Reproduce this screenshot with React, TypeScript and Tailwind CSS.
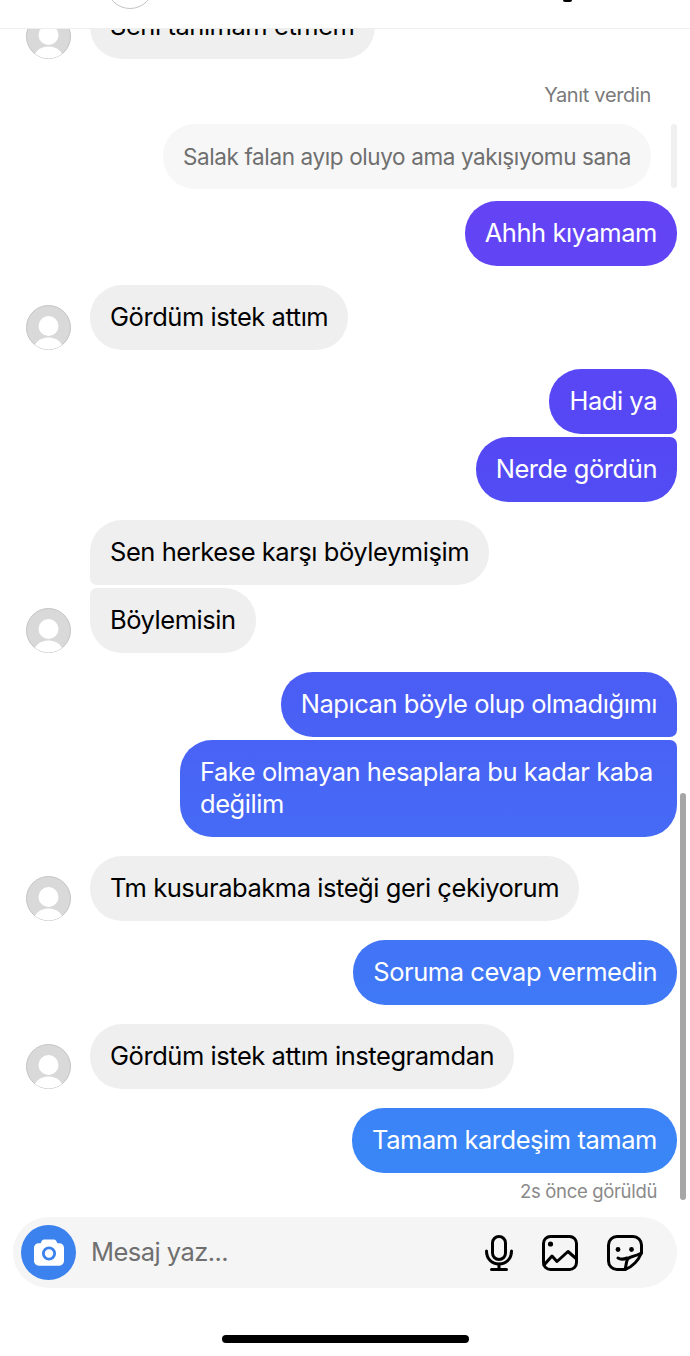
import React from "react";

const font = { fontFamily: '"Inter", "Liberation Sans", sans-serif' };

function Avatar() {
  return (
    <svg viewBox="0 0 45 45" className="w-[45px] h-[45px] shrink-0 block">
      <defs>
        <clipPath id="avatarClip">
          <circle cx="22.5" cy="22.5" r="22" />
        </clipPath>
      </defs>
      <circle cx="22.5" cy="22.5" r="22" fill="#d9d9d9" stroke="#c4c4c4" />
      <g clipPath="url(#avatarClip)" fill="#fff">
        <circle cx="22.5" cy="21" r="10" />
        <ellipse cx="22.5" cy="45" rx="15" ry="12.500" />
      </g>
    </svg>
  );
}

function Incoming({ text, mt, avatar, tight }: { text: string; mt: string; avatar?: boolean; tight?: string }) {
  return (
    <div className={`flex items-end ${mt}`}>
      <div className="w-[90px] shrink-0 pl-[26px]">{avatar ? <Avatar /> : null}</div>
      <div className={`h-[65px] flex items-center px-5 bg-[#efefef] text-black text-[25.5px] tracking-[-0.45px] rounded-[32px] ${tight ?? ""}`}>
        {text}
      </div>
    </div>
  );
}

function Outgoing({ children, mt, tight }: { children: React.ReactNode; mt: string; tight?: string }) {
  return (
    <div className={`flex justify-end pr-[13px] ${mt}`}>
      <div className={`bg-fixed bg-[linear-gradient(180deg,#6840f4_0px,#6344f5_230px,#5448f4_450px,#4a5ff5_704px,#3a86f7_1150px,#3a86f7_1356px)] text-white text-[25.5px] tracking-[-0.45px] leading-[32px] px-5 pt-4 pb-[17px] rounded-[32px] ${tight ?? ""}`}>
        {children}
      </div>
    </div>
  );
}

function Mic() {
  return (
    <svg viewBox="0 0 28 36" className="w-[28px] h-[36px]" fill="none" stroke="#000" strokeWidth="3" strokeLinecap="round" strokeLinejoin="round">
      <rect x="7.500" y="1.500" width="13" height="23" rx="6.500" />
      <path d="M1.500 16c0 8 5.500 13 12.500 13s12.500-5 12.500-13" />
      <path d="M14 29v5.500M6.500 34.500h15" />
    </svg>
  );
}

function ImageIcon() {
  return (
    <svg viewBox="0 0 36 36" className="w-[36px] h-[36px]" fill="none" stroke="#000" strokeWidth="3" strokeLinejoin="round" strokeLinecap="round">
      <rect x="1.500" y="1.500" width="33" height="33" rx="7" />
      <circle cx="8.500" cy="9" r="2.600" fill="#000" stroke="none" />
      <path d="M2 30l8-9 5 5.500 11-10 8 7" />
    </svg>
  );
}

function Sticker() {
  return (
    <svg viewBox="0 0 36 36" className="w-[36px] h-[36px]" fill="none" stroke="#000" strokeWidth="3" strokeLinejoin="round" strokeLinecap="round">
      <path d="M18 34.500H10A8.500 8.500 0 0 1 1.500 26V10A8.500 8.500 0 0 1 10 1.500h16A8.500 8.500 0 0 1 34.500 10v8C31 26 25 32 18 34.500z" />
      <path d="M18 34.500c1-3 1-6 2-9 .5-2 2-3 4-3.500 3.500-1 7-2 10.500-4" />
      <path d="M11 23c2.500 1.500 5.500 1.500 9 0" />
      <circle cx="11" cy="14.500" r="2.400" fill="#000" stroke="none" />
      <circle cx="24.500" cy="14.500" r="2.400" fill="#000" stroke="none" />
    </svg>
  );
}

function Camera() {
  return (
    <svg viewBox="0 0 32 28" className="w-[30px] h-[27px]">
      <path fill="#fff" d="M11 0h10a3 3 0 0 1 2.600 1.500L25 4h2a5 5 0 0 1 5 5v14a5 5 0 0 1-5 5H5a5 5 0 0 1-5-5V9a5 5 0 0 1 5-5h2l1.400-2.500A3 3 0 0 1 11 0z" />
      <circle cx="16" cy="15" r="6" fill="none" stroke="#3b82ee" strokeWidth="3" />
    </svg>
  );
}

export default function App() {
  return (
    <div style={font} className="relative w-[690px] h-[1356px] bg-white overflow-hidden flex flex-col">
      <header className="relative z-10 h-[29px] shrink-0 bg-white border-b border-[#eeeeee] overflow-hidden flex justify-between pl-[106px] pr-[118px]">
        <div className="w-[48px] h-[48px] -mt-[39px] rounded-full border border-[#c4c4c4] bg-white" />
        <div className="w-[9px] h-[2px] rounded-b-full bg-black" />
      </header>

      <main className="flex-1 flex flex-col -mt-[35px] min-h-0">
        <Incoming text="Seni tanımam etmem" mt="mt-0" avatar />

        <div className="mt-[23px] pr-[39px] text-right text-[20px] tracking-[-0.33px] leading-[26px] text-[#7a7a7a]">Yanıt verdin</div>

        <div className="flex justify-end pr-[39px] mt-[16px]">
          <div className="h-[65px] flex items-center px-5 rounded-[32px] bg-[#f7f7f7] text-[#6f6f6f] text-[22.5px] tracking-[-0.38px]">
            Salak falan ayıp oluyo ama yakışıyomu sana
          </div>
        </div>

        <Outgoing mt="mt-[12px]">Ahhh kıyamam</Outgoing>
        <Incoming text="Gördüm istek attım" mt="mt-[19px]" avatar />
        <Outgoing mt="mt-[19px]" tight="rounded-br-[7px]">Hadi ya</Outgoing>
        <Outgoing mt="mt-[3px]" tight="rounded-tr-[7px]">Nerde gördün</Outgoing>
        <Incoming text="Sen herkese karşı böyleymişim" mt="mt-[18px]" tight="rounded-bl-[7px]" />
        <Incoming text="Böylemisin" mt="mt-[3px]" avatar tight="rounded-tl-[7px]" />
        <Outgoing mt="mt-[19px]" tight="rounded-br-[7px]">Napıcan böyle olup olmadığımı</Outgoing>
        <Outgoing mt="mt-[3px]" tight="rounded-tr-[7px] w-[497px]">
          Fake olmayan hesaplara bu kadar kaba değilim
        </Outgoing>
        <Incoming text="Tm kusurabakma isteği geri çekiyorum" mt="mt-[19px]" avatar />
        <Outgoing mt="mt-[19px]">Soruma cevap vermedin</Outgoing>
        <Incoming text="Gördüm istek attım instegramdan" mt="mt-[19px]" avatar />
        <Outgoing mt="mt-[19px]">Tamam kardeşim tamam</Outgoing>

        <div className="mt-[6px] pr-[33px] text-right text-[18.5px] tracking-[-0.33px] leading-[24px] text-[#8a8a8a]">2s önce görüldü</div>

        <div className="mt-[14px] mx-[13px] h-[71px] rounded-[36px] bg-[#f5f5f5] flex items-center pl-[8px] pr-[34px]">
          <div className="w-[55px] h-[55px] rounded-full bg-[#3b82ee] flex items-center justify-center shrink-0">
            <Camera />
          </div>
          <div className="ml-[15px] flex-1 text-[25.5px] tracking-[-0.55px] text-[#6f6f6f]">Mesaj yaz...</div>
          <div className="flex items-center gap-[29px]">
            <Mic />
            <ImageIcon />
            <Sticker />
          </div>
        </div>

        <div className="mt-[47px] self-center w-[247px] h-[8px] rounded-full bg-black" />
      </main>

      <div className="absolute left-[671px] top-[124px] w-[6px] h-[64px] rounded-full bg-[#f0f0f0]" />
      <div className="absolute left-[680px] top-[793px] w-[6px] h-[407px] rounded-full bg-[#a6a6a6]" />
    </div>
  );
}
